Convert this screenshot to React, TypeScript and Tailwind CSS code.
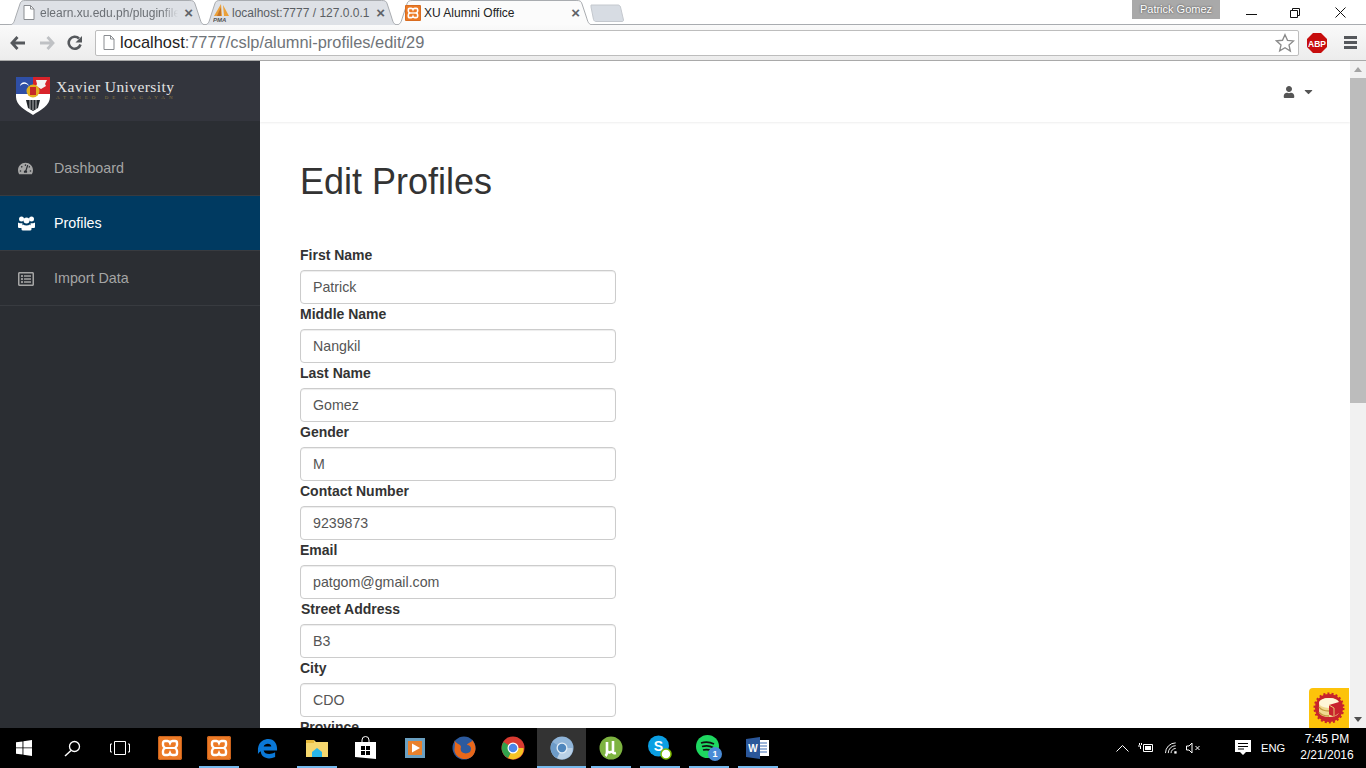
import React from "react";
import { FaTachometerAlt, FaRegListAlt, FaUser, FaCaretDown } from "react-icons/fa";

const XamppIcon = ({ size = 24 }: { size?: number }) => (
  <svg width={size} height={size} viewBox="0 0 24 24">
    <rect x="0" y="0" width="24" height="24" rx="2" fill="#ec7a26" />
    <rect x=".5" y=".5" width="23" height="23" rx="2" fill="none" stroke="#c9621c" />
    <path d="M7 5h2.500q1.800 0 2.500 1.800Q12.700 5 14.500 5H17q2 0 2 2v2q0 2-2.200 3 2.200 1 2.200 3v2q0 2-2 2h-2.500q-1.800 0-2.500-1.800Q11.300 19 9.500 19H7q-2 0-2-2v-2q0-2 2.200-3Q5 11 5 9V7q0-2 2-2z" fill="none" stroke="#fff" strokeWidth="2.400" />
    <path d="M8 12h8" stroke="#fff" strokeWidth="2" />
  </svg>
);

const Doc = () => (
  <svg width="12" height="15" viewBox="0 0 12 15">
    <path d="M1 .5h6.500L11 4v10.500H1z" fill="#fff" stroke="#8a8d91" />
    <path d="M7.500.5V4H11" fill="none" stroke="#8a8d91" />
  </svg>
);

const Pma = () => (
  <svg width="17" height="20" viewBox="0 0 17 20">
    <path d="M1 13 8 1l1 12zM10 2l6 11h-5z" fill="#eba13a" />
    <path d="M4 13 8 4v9z" fill="#c5762a" />
    <text x="0" y="19" fontSize="6" fontStyle="italic" fontWeight="700" fill="#555" fontFamily="Liberation Sans">PMA</text>
  </svg>
);

function Tab({ cls, active, icon, title, textCls, iconCls }: { cls: string; active?: boolean; icon: React.ReactNode; title: string; textCls: string; iconCls: string }) {
  return (
    <div className={`relative h-[25px] shrink-0 ${cls} ${active ? "z-10" : ""}`}>
      <svg className="absolute inset-0 h-full w-full" viewBox="0 0 200 25" preserveAspectRatio="none">
        <path d="M0 25 C6 25 6 22 8 16 L12 4 C13 1 14 .5 18 .5 H182 C186 .5 187 1 188 4 L192 16 C194 22 194 25 200 25" fill={active ? "#fbfbfb" : "#dee1e6"} stroke="#a9acb0" strokeWidth="1" vectorEffect="non-scaling-stroke" />
      </svg>
      <div className="relative flex h-full items-center pr-[14px]">
        <span className={`flex shrink-0 items-center justify-start ${iconCls}`}>{icon}</span>
        <span className={`min-w-0 flex-1 overflow-hidden whitespace-nowrap text-[12px] ${textCls}`}>{title}</span>
        <span className="ml-[6px] text-[15px] font-bold leading-none text-[#5f6368]">×</span>
      </div>
    </div>
  );
}

const Shield = () => (
  <svg className="mt-[10px] shrink-0" width="36" height="40" viewBox="0 0 36 40">
    <path d="M1 1h34v20c0 8-9 13-17 18C10 34 1 29 1 21z" fill="#fff" />
    <path d="M1 1h17v17H1z" fill="#2f4fa6" />
    <path d="M18 1h17v17H18z" fill="#d8232a" />
    <path d="M5 10c1-5 7-5 9 0-3-3-6-3-9 0z" fill="#fff" />
    <path d="M21 4h11l-2 4 1 2-5 3-5-3 1-2z" fill="#f3f3f3" />
    <circle cx="18" cy="15" r="6.500" fill="#e2b020" />
    <rect x="15" y="11" width="6" height="8" fill="#c62828" />
    <path d="M11 24h14l-2 8-5 3-5-3z" fill="#23272b" />
    <path d="M15 24v9M18 24v10M21 24v9" stroke="#ddd" strokeWidth=".8" />
  </svg>
);

const UsersIcon = () => (
  <svg width="17" height="15" viewBox="0 0 17 15" fill="#fff">
    <circle cx="3.500" cy="3" r="2.500" />
    <circle cx="13.500" cy="3" r="2.500" />
    <circle cx="8.500" cy="4.500" r="3" />
    <path d="M0 6.500q1 .8 2 .8h2.500L4 12H1q-1 0-1-1.200z" />
    <path d="M17 6.500q-1 .8-2 .8h-2.500L13 12h3q1 0 1-1.200z" />
    <path d="M5 8.500q1.500 1 3.500 1t3.500-1q1.500.5 1.500 3v1.700q0 1.300-1.500 1.300h-7q-1.500 0-1.500-1.300v-1.700q0-2.500 1.500-3z" />
  </svg>
);

const NavItem = ({ icon, label, active }: { icon: React.ReactNode; label: string; active?: boolean }) => (
  <div className={`flex h-[55px] items-center border-b border-[#383b40] pl-[18px] pt-[1px] text-[14.300px] ${active ? "bg-[#003a61] text-white" : "text-[#a5a5a5]"}`}>
    <span className="flex w-[36px] shrink-0 items-center">{icon}</span>
    <span>{label}</span>
  </div>
);

const Field = ({ label, value, offset }: { label: string; value: string; offset?: boolean }) => (
  <div className="flex flex-col">
    <label className={`mb-[5px] h-5 text-[14px] font-bold leading-5 text-[#333] ${offset ? "pl-px" : ""}`}>{label}</label>
    <input readOnly defaultValue={value} className="h-[34px] w-[316px] rounded border border-[#ccc] bg-white px-3 text-[14.200px] text-[#555] shadow-[inset_0_1px_1px_rgba(0,0,0,0.075)] outline-none" />
  </div>
);

const Slot = ({ children, active, on }: { children: React.ReactNode; active?: boolean; on?: boolean }) => (
  <div className={`relative flex h-10 w-[49px] shrink-0 items-center justify-center ${active ? "bg-[#333]" : ""}`}>
    {children}
    {on && <span className={`absolute bottom-0 h-[2px] bg-[#76b9ed] ${active ? "inset-x-0" : "left-[5px] w-[40px]"}`} />}
  </div>
);

export default function App() {
  return (
    <div className="flex h-screen w-[1366px] flex-col overflow-hidden bg-white font-['Liberation_Sans',Arial,sans-serif]">
      {/* tab strip */}
      <div className="relative flex h-[25px] shrink-0 items-end bg-white pl-[8px]">
        <div className="absolute inset-x-0 bottom-0 h-px bg-[#a9acb0]" />
        <Tab cls="w-[199px]" iconCls="w-[17px] ml-[15px]" icon={<Doc />} title="elearn.xu.edu.ph/pluginfile" textCls="text-[#6b6f74] [mask-image:linear-gradient(to_right,black_88%,transparent)]" />
        <Tab cls="w-[196px] -ml-[4px]" iconCls="w-[19px] ml-[10px]" icon={<Pma />} title="localhost:7777 / 127.0.0.1" textCls="text-[#5a5e63]" />
        <Tab cls="w-[199px] -ml-[4px]" active iconCls="w-[19px] ml-[10px]" icon={<XamppIcon size={16} />} title="XU Alumni Office" textCls="text-[#222]" />
        <svg className="-ml-[4px] mb-[3px] shrink-0" width="34" height="18" viewBox="0 0 34 18">
          <path d="M1 1h27c1 0 2 .5 2.500 2l3 13c0 1-.5 1.500-1.500 1.500H6c-1 0-2-.5-2.500-2L1 3z" fill="#d7dce3" stroke="#c4c8ce" />
        </svg>
        <div className="absolute right-[146px] top-0 flex h-[19px] w-[88px] items-center justify-center bg-[#a9a9a9] text-[11px] text-white [text-shadow:0_0_2px_#333]">Patrick Gomez</div>
        <div className="absolute right-[20px] top-0 flex h-[25px] items-center">
          <svg width="11" height="10" viewBox="0 0 11 10"><path d="M0 6.500h11" stroke="#111" /></svg>
          <svg className="ml-[33px]" width="10" height="10" viewBox="0 0 10 10"><path d="M.5 2.500h7v7h-7zM2.500 2.500v-2h7v7h-2" fill="none" stroke="#111" /></svg>
          <svg className="ml-[35px]" width="11" height="11" viewBox="0 0 11 11"><path d="M.5.500l10 10M10.500.500l-10 10" stroke="#111" /></svg>
        </div>
      </div>
      {/* toolbar */}
      <div className="flex h-[36px] shrink-0 items-center border-b border-[#a9a9a9] bg-gradient-to-b from-[#fafafa] to-[#ececec]">
        <div className="flex w-[95px] items-center pl-[10px]">
          <svg width="16" height="14" viewBox="0 0 16 14"><path d="M7.500 1 2 7l5.500 6M2.500 7H15" fill="none" stroke="#55585c" strokeWidth="2.800" /></svg>
          <svg className="ml-[13px]" width="16" height="14" viewBox="0 0 16 14"><path d="M8.500 1 14 7l-5.500 6M13.500 7H1" fill="none" stroke="#bfc1c4" strokeWidth="2.800" /></svg>
          <svg className="ml-[12px]" width="16" height="16" viewBox="0 0 16 16"><path d="M13.500 9.500A6 6 0 1 1 12 3.500" fill="none" stroke="#55585c" strokeWidth="2.600" /><path d="M15 1v6.500H8.500z" fill="#55585c" /></svg>
        </div>
        <div className="flex h-[26px] w-[1204px] shrink-0 items-center rounded-[2px] border border-[#bdbdbd] bg-white pl-[7px] pr-[3px] text-[16.400px]">
          <Doc />
          <span className="ml-[5px] text-[#222]">localhost</span>
          <span className="text-[#6f7479]">:7777/cslp/alumni-profiles/edit/29</span>
          <svg className="ml-auto" width="20" height="20" viewBox="0 0 24 24"><path d="m12 2 3 6.800 7.300.7-5.500 4.900 1.600 7.200L12 17.600l-6.400 3.900 1.600-7.200-5.500-4.900 7.300-.7z" fill="#fff" stroke="#8a8a8a" strokeWidth="1.600" /></svg>
        </div>
        <svg className="ml-[8px]" width="20" height="20" viewBox="0 0 20 20">
          <path d="M6 0h8l6 6v8l-6 6H6l-6-6V6z" fill="#c70d0d" />
          <text x="10" y="13.500" textAnchor="middle" fontSize="8.500" fontWeight="700" fill="#fff" fontFamily="Liberation Sans">ABP</text>
        </svg>
        <div className="ml-[17px] flex w-[13px] flex-col gap-[2px]">
          <span className="h-[3px] bg-[#55585c]" />
          <span className="h-[3px] bg-[#55585c]" />
          <span className="h-[3px] bg-[#55585c]" />
        </div>
      </div>
      {/* page */}
      <div className="relative flex min-h-0 flex-1">
        <aside className="flex w-[260px] shrink-0 flex-col bg-[#2b2e33]">
          <div className="flex h-[60px] shrink-0 items-center bg-[#33353d] pl-[15px]">
            <Shield />
            <div className="ml-[5px] mt-[-3px] flex flex-col">
              <span className="font-['Liberation_Serif',serif] text-[15.500px] leading-[16px] tracking-[0.400px] text-[#e4e4e4]">Xavier University</span>
              <span className="whitespace-nowrap font-['Liberation_Serif',serif] text-[5px] leading-[6px] tracking-[4px] text-[#8d7a3e]">ATENEO DE CAGAYAN</span>
            </div>
          </div>
          <nav className="mt-[20px]">
            <NavItem icon={<FaTachometerAlt className="text-[15px] text-[#a5a5a5]" />} label="Dashboard" />
            <NavItem active icon={<UsersIcon />} label="Profiles" />
            <NavItem icon={<FaRegListAlt className="text-[16px] text-[#a5a5a5]" />} label="Import Data" />
          </nav>
        </aside>
        <main className="min-w-0 flex-1 overflow-hidden">
          <div className="flex h-[61px] items-center justify-end pr-[35px] shadow-[0_1px_2px_rgba(0,0,0,0.07)]">
            <FaUser className="text-[12px] text-[#555]" />
            <FaCaretDown className="ml-[7px] text-[13px] text-[#555]" />
          </div>
          <div className="px-[40px]">
            <h1 className="mb-[43px] mt-[40px] text-[36px] font-normal leading-[40px] text-[#333]">Edit Profiles</h1>
            <div className="flex flex-col">
              <Field label="First Name" value="Patrick" />
              <Field label="Middle Name" value="Nangkil" />
              <Field label="Last Name" value="Gomez" />
              <Field label="Gender" value="M" />
              <Field label="Contact Number" value="9239873" />
              <Field label="Email" value="patgom@gmail.com" />
              <Field label="Street Address" value="B3" offset />
              <Field label="City" value="CDO" />
              <Field label="Province" value="" />
            </div>
          </div>
        </main>
        {/* scrollbar */}
        <div className="flex w-[16px] shrink-0 flex-col items-center bg-[#f1f1f1]">
          <div className="flex h-[17px] items-center justify-center"><span className="border-x-[4px] border-b-[5px] border-x-transparent border-b-[#a3a3a3]" /></div>
          <div className="h-[325px] w-full bg-[#bcbcbc]" />
          <div className="mt-auto flex h-[17px] items-center justify-center"><span className="border-x-[4px] border-t-[5px] border-x-transparent border-t-[#505050]" /></div>
        </div>
        {/* floating debug badge */}
        <div className="absolute bottom-0 right-[17px] flex h-[40px] w-[40px] items-center justify-center rounded-tl-[4px] bg-[#fdc30a]">
          <svg width="32" height="32" viewBox="0 0 32 32">
            <circle cx="16" cy="16" r="14" fill="#c8232c" stroke="#c8232c" strokeDasharray="2 2" strokeWidth="3" />
            <path d="M6 11c0-3 5-5 10-5s10 2 10 5v9c0 3-5 5-10 5s-10-2-10-5z" fill="#f0d98f" />
            <ellipse cx="16" cy="11" rx="10" ry="5" fill="#fff6d6" />
            <path d="M6 15c2 3 7 4 10 4M6 20c2 3 7 4 10 4" stroke="#c39a3f" strokeWidth="1.300" fill="none" />
            <path d="M16 13l10-3v11l-5 3.500-5-2z" fill="#c8232c" />
            <path d="M16 13l5 3v8.500" stroke="#e9c96f" strokeWidth="1" fill="none" />
          </svg>
        </div>
      </div>
      {/* taskbar */}
      <div className="flex h-10 shrink-0 items-center bg-black text-white">
        <div className="flex w-[48px] justify-center">
          <svg width="16" height="16" viewBox="0 0 16 16" fill="#fff"><path d="M0 2.300 6.500 1.400v6H0zM7.400 1.300 16 0v7.400H7.400zM0 8.300h6.500v6.300L0 13.700zM7.400 8.300H16V16l-8.600-1.200z" /></svg>
        </div>
        <div className="flex w-[48px] justify-center">
          <svg width="17" height="17" viewBox="0 0 17 17"><circle cx="10.500" cy="6.500" r="5" fill="none" stroke="#fff" strokeWidth="1.300" /><path d="M7 10.500 1 16" stroke="#fff" strokeWidth="1.500" /></svg>
        </div>
        <div className="flex w-[48px] justify-center">
          <svg width="20" height="14" viewBox="0 0 20 14" fill="none" stroke="#fff"><path d="M4.500.500h11v13h-11zM2 3H.500v8H2M18 3h1.500v8H18" /></svg>
        </div>
        <div className="w-[1px] shrink-0" />
        <Slot><XamppIcon /></Slot>
        <Slot on><XamppIcon /></Slot>
        <Slot>
          <svg width="21" height="21" viewBox="0 0 22 22"><path d="M1 11C2 3 8 1 12 1c6 0 9 5 9 10v2H7c.5 4 7 5 12 2v5c-7 3-15 1-15-6-1 1-2 1-3 3zM7 9h8c0-4-7-4-8 0z" fill="#0a78d7" /></svg>
        </Slot>
        <Slot on>
          <svg width="22" height="20" viewBox="0 0 22 20"><path d="M0 2h8l2 2h12v15H0z" fill="#f5d76e" /><path d="M0 2h8v3H0z" fill="#e6b93b" /><path d="M6 14 11 10l5 4v5H6z" fill="#28b6e8" /></svg>
        </Slot>
        <Slot>
          <svg width="21" height="24" viewBox="0 0 21 24"><path d="M7 6V4a3.500 3.500 0 0 1 7 0v2" fill="none" stroke="#fff" /><path d="M0 6h21v17l-21-2z" fill="#fff" /><path d="M6 10h4v4H6zM11 10h4v4h-4zM6 15h4v4H6zM11 15h4v4h-4z" fill="#000" /></svg>
        </Slot>
        <Slot>
          <svg width="20" height="20" viewBox="0 0 20 20"><rect width="20" height="20" fill="#6a9fc0" /><rect x="3" y="3" width="14" height="14" fill="#e9812c" /><path d="M7 5.500 15 10l-8 4.500z" fill="#fff" /></svg>
        </Slot>
        <Slot>
          <svg width="24" height="24" viewBox="0 0 24 24"><circle cx="12" cy="12" r="11.500" fill="#2c5a9e" /><path d="M2 4c2 4 0 8 .5 11 2 9 15 11 19.500 3 3-5 1-11-2-14 0 3-4 2-5 5 4 0 5 4 3 7-4 3-11 1-9-5 0-3-5-3-7-7z" fill="#e8671a" /></svg>
        </Slot>
        <Slot>
          <svg width="24" height="24" viewBox="0 0 24 24"><circle cx="12" cy="12" r="11.500" fill="#d93a31" /><path d="M12 12 22.500 12A10.500 10.500 0 0 1 7 22z" fill="#f6c324" /><path d="M12 12 7 22A11 11 0 0 1 2.500 6z" fill="#31a24c" /><circle cx="12" cy="12" r="5.500" fill="#fff" /><circle cx="12" cy="12" r="4.300" fill="#4b86e8" /></svg>
        </Slot>
        <Slot active on>
          <svg width="24" height="24" viewBox="0 0 24 24"><circle cx="12" cy="12" r="11.500" fill="#8fb4d8" /><path d="M12 12 22.500 12A10.500 10.500 0 0 1 7 22z" fill="#b9d0e6" /><path d="M12 12 7 22A11 11 0 0 1 2.500 6z" fill="#6d9bc8" /><circle cx="12" cy="12" r="5.500" fill="#e4eef7" /><circle cx="12" cy="12" r="4.200" fill="#4f86bd" /></svg>
        </Slot>
        <Slot on>
          <svg width="24" height="24" viewBox="0 0 24 24"><circle cx="12" cy="12" r="11.500" fill="#7db340" /><path d="M8 6v10c0 2-.5 3-1.500 4M8 14c0 3 4 3 5 1M14 5v11c0 1 1 1.500 3 1" fill="none" stroke="#fff" strokeWidth="2.600" /></svg>
        </Slot>
        <Slot on>
          <svg width="24" height="26" viewBox="0 0 24 26"><circle cx="10.500" cy="11" r="10.500" fill="#0b9fe3" /><text x="10.500" y="16" textAnchor="middle" fontSize="14" fontWeight="700" fill="#fff" fontFamily="Liberation Sans">S</text><circle cx="18" cy="19" r="5" fill="#fff" stroke="#7fba00" strokeWidth="1.500" /></svg>
        </Slot>
        <Slot on>
          <svg width="26" height="26" viewBox="0 0 26 26"><circle cx="11.500" cy="11.500" r="11.500" fill="#1ed760" /><path d="M5 8c5-1.500 9-1 13 1M6 11.500c4-1 8-.8 11 1M7 15c3-.8 6-.5 9 .8" fill="none" stroke="#111" strokeWidth="1.800" /><circle cx="19" cy="19" r="7" fill="#4a8bd6" /><text x="19" y="22" textAnchor="middle" fontSize="9" fontWeight="700" fill="#fff" fontFamily="Liberation Sans">1</text></svg>
        </Slot>
        <Slot on>
          <svg width="24" height="22" viewBox="0 0 24 22"><path d="M10 3h13v16H10z" fill="#fff" /><path d="M14 6h7M14 9h7M14 12h7M14 15h7" stroke="#3d6cb4" strokeWidth="1.200" /><path d="M0 2 14 0v22L0 20z" fill="#2b579a" /><text x="7" y="15" textAnchor="middle" fontSize="10" fontWeight="700" fill="#fff" fontFamily="Liberation Sans">W</text></svg>
        </Slot>
        <div className="ml-auto flex h-full items-center pr-[12px]">
          <svg width="13" height="8" viewBox="0 0 13 8"><path d="M.5 7.500l6-6 6 6" fill="none" stroke="#fff" /></svg>
          <svg className="ml-[9px]" width="16" height="12" viewBox="0 0 16 12" fill="none" stroke="#fff"><path d="M0 4h3M1.500 1v2M3.500 1v2M2.500 4v3M5.500 2.500h9v7h-9z" /><rect x="7" y="4" width="6" height="4" fill="#fff" stroke="none" /></svg>
          <svg className="ml-[11px]" width="13" height="12" viewBox="0 0 14 12" fill="none" stroke="#fff"><path d="M.5 11.500a11 11 0 0 1 11-11M3.500 11.500a8 8 0 0 1 8-8M6.500 11.500a5 5 0 0 1 5-5" /><rect x="10" y="9.500" width="2.500" height="2.500" fill="#fff" stroke="none" /></svg>
          <svg className="ml-[8px]" width="15" height="12" viewBox="0 0 15 12" fill="none" stroke="#fff"><path d="M.5 4h2.500l3-3v10l-3-3H.5zM9.500 4l4 4M13.500 4l-4 4" /></svg>
          <svg className="ml-[34px]" width="16" height="16" viewBox="0 0 16 16"><path d="M0 0h16v12h-5l-3 3-3-3H0z" fill="#fff" /><path d="M3 3.500h10M3 6.500h10M3 9h6" stroke="#000" /></svg>
          <span className="ml-[10px] w-[23px] whitespace-nowrap text-[11.200px]">ENG</span>
          <div className="mb-[2px] ml-[16px] flex w-[54px] flex-col items-center text-[12px] leading-[16px]">
            <span>7:45 PM</span>
            <span>2/21/2016</span>
          </div>
        </div>
      </div>
    </div>
  );
}
